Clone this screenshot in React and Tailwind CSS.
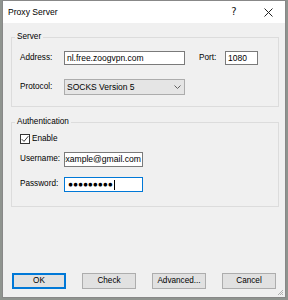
export default function App() {
  return (
    <div className="w-[288px] h-[300px] bg-[#8f948f] pl-[2px] font-['Liberation_Sans',Arial,sans-serif] text-black text-[8.2px] leading-none">
      <div className="relative w-[284px] h-[298px] border border-[#888888] bg-[#f0f0f0] flex flex-col">
        {/* Title bar */}
        <div className="h-[22px] bg-white flex items-center shrink-0">
          <span className="pl-[5px] text-[8.6px]">Proxy Server</span>
          <div className="ml-auto flex h-full">
            <div className="w-[34px] flex items-center justify-center text-[10px] font-['DejaVu_Sans',sans-serif] text-[#111]">?</div>
            <div className="w-[34px] flex items-center justify-center">
              <svg width="9" height="9" viewBox="0 0 9 9">
                <path d="M0.5 0.5 L8.5 8.5 M8.5 0.5 L0.5 8.5" stroke="#222" strokeWidth="1" fill="none" />
              </svg>
            </div>
          </div>
        </div>

        {/* Server group */}
        <div className="relative ml-[8px] mt-[14px] w-[268px] border border-[#dcdcdc] pt-[13px] pb-[11px] pl-[8px] shrink-0">
          <span className="absolute left-[3px] -top-[7px] bg-[#f0f0f0] px-[2px] leading-[11px]">Server</span>
          <div className="flex items-center h-[14px]">
            <span className="w-[44px]">Address:</span>
            <div className="w-[121px] h-[14px] border border-[#7a7a7a] bg-white flex items-center pl-[2px] whitespace-nowrap overflow-hidden text-[8.5px]">nl.free.zoogvpn.com</div>
            <span className="ml-[14px] w-[26px]">Port:</span>
            <div className="w-[33px] h-[14px] border border-[#7a7a7a] bg-white flex items-center pl-[2px] text-[8.5px]">1080</div>
          </div>
          <div className="flex items-center mt-[14px] h-[16px]">
            <span className="w-[44px]">Protocol:</span>
            <div className="w-[121px] h-[16px] border border-[#acacac] bg-[#e5e5e5] flex items-center justify-between pl-[2px] pr-[3px] text-[8.5px]">
              <span>SOCKS Version 5</span>
              <svg width="7" height="4" viewBox="0 0 7 4">
                <path d="M0.5 0.5 L3.5 3.5 L6.5 0.5" stroke="#606060" strokeWidth="1" fill="none" />
              </svg>
            </div>
          </div>
        </div>

        {/* Authentication group */}
        <div className="relative ml-[8px] mt-[15px] w-[268px] border border-[#dcdcdc] pt-[11px] pb-[14px] pl-[8px] shrink-0">
          <span className="absolute left-[3px] -top-[7px] bg-[#f0f0f0] px-[2px] leading-[11px]">Authentication</span>
          <div className="flex items-center h-[10px]">
            <div className="w-[10px] h-[10px] border border-[#333333] bg-white flex items-center justify-center">
              <svg width="8" height="8" viewBox="0 0 8 8">
                <path d="M0.8 4.2 L3 6.4 L7.3 1.2" stroke="#222" strokeWidth="0.9" fill="none" />
              </svg>
            </div>
            <span className="ml-[2px]">Enable</span>
          </div>
          <div className="flex items-center mt-[8px] h-[15px]">
            <span className="w-[44px]">Username:</span>
            <div className="w-[79px] h-[15px] border border-[#7a7a7a] bg-white flex items-center justify-end pr-[1px] overflow-hidden">
              <span className="whitespace-nowrap text-[8.6px]">example@gmail.com</span>
            </div>
          </div>
          <div className="flex items-center mt-[10px] h-[15px]">
            <span className="w-[44px]">Password:</span>
            <div className="w-[79px] h-[15px] border border-[#0078d7] bg-white flex items-center pl-[3px] overflow-hidden">
              <span className="whitespace-nowrap text-[8.4px] tracking-[-0.1px]">●●●●●●●●●</span>
              <span className="w-[1px] h-[10px] bg-black ml-[1px]" />
            </div>
          </div>
        </div>

        {/* Buttons */}
        <div className="mt-auto flex justify-between px-[9px] pb-[8px]">
          <button className="w-[54px] h-[16px] border border-[#0078d7] shadow-[inset_0_0_0_1px_#0078d7] bg-[#e1e1e1] flex items-center justify-center">OK</button>
          <button className="w-[54px] h-[16px] border border-[#adadad] bg-[#e1e1e1] flex items-center justify-center">Check</button>
          <button className="w-[54px] h-[16px] border border-[#adadad] bg-[#e1e1e1] flex items-center justify-center">Advanced...</button>
          <button className="w-[54px] h-[16px] border border-[#adadad] bg-[#e1e1e1] flex items-center justify-center">Cancel</button>
        </div>

        {/* Resize grip */}
        <svg className="absolute right-[1px] bottom-[1px]" width="7" height="7" viewBox="0 0 7 7">
          <path d="M6 1 L1 6 M6 3 L3 6 M6 5 L5 6" stroke="#a0a0a0" strokeWidth="0.8" fill="none" />
        </svg>
      </div>
    </div>
  );
}
